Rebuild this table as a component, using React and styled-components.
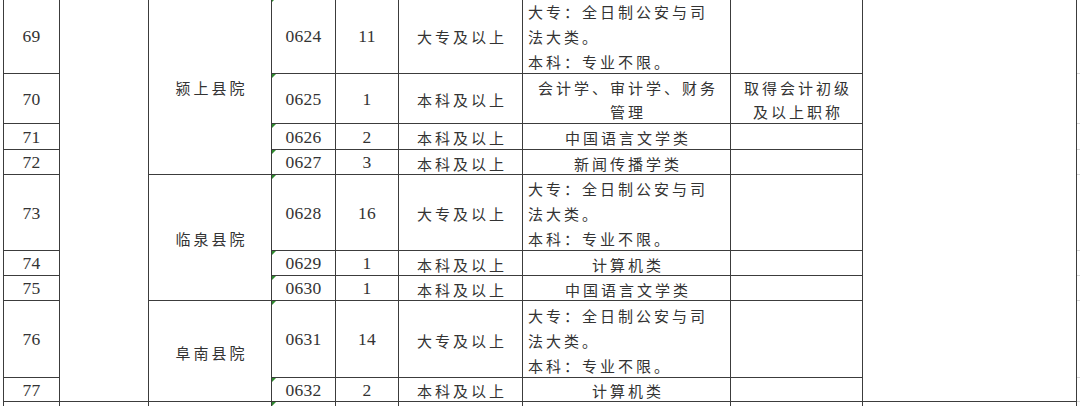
import React from "react";
import styled, { createGlobalStyle, css } from "styled-components";

const Global = createGlobalStyle`
  html, body { margin: 0; padding: 0; background: #fff; overflow: hidden; }
  #root { width: 1080px; height: 406px; overflow: hidden; }
`;

const LINE = "#3c3c3c";

const Page = styled.div`
  width: 1080px;
  height: 406px;
  overflow: hidden;
  background: #fff;
`;

const Sheet = styled.div`
  display: grid;
  grid-template-columns: 56px 89px 123px 64px 63px 124px 208px 132px 214px 20px;
  grid-template-rows: 76px 50px 26px 25px 76px 25px 25px 77px 24px 30px;
  margin: -2px 0 0 3px;
  border-left: 1px solid ${LINE};
  width: max-content;
  color: #2a2a2a;
`;

const Cell = styled.div`
  box-sizing: border-box;
  grid-column: ${(p) => p.$c};
  grid-row: ${(p) => p.$r} / span ${(p) => p.$rs || 1};
  border-right: 1px solid ${LINE};
  border-bottom: 1px solid ${LINE};
  display: flex;
  align-items: center;
  justify-content: center;
  position: relative;
  overflow: hidden;
`;

const NumCell = styled(Cell)`
  font-family: "Liberation Serif", "Times New Roman", serif;
  font-size: 17.5px;
  letter-spacing: 0.3px;
  color: #333;
  padding-top: 1px;
`;

const CodeCell = styled(NumCell)`
  &::before {
    content: "";
    position: absolute;
    left: 0;
    top: 0;
    border-top: 4px solid #2f8a2f;
    border-right: 4px solid transparent;
  }
`;

const TextCell = styled(Cell)`
  font-family: "Noto Sans CJK SC", "Noto Sans", sans-serif;
  font-size: 15px;
  letter-spacing: 3px;
  line-height: 25px;
  white-space: nowrap;
  color: #333;
  padding-top: 2px;
  ${(p) =>
    p.$left
      ? css`
          justify-content: flex-start;
          padding-left: 5px;
        `
      : css`
          padding-left: 3px;
          text-align: center;
        `}
`;

const Lines = styled.div`
  display: flex;
  flex-direction: column;
  align-items: ${(p) => (p.$left ? "flex-start" : "center")};
  line-height: ${(p) => p.$lh || 25}px;
`;

const Blank = styled(Cell)`
  ${(p) =>
    p.$faint &&
    css`
      border-right: none;
      border-bottom: 1px solid #d6d6d6;
    `}
`;

const police = ["大专：全日制公安与司", "法大类。", "本科：专业不限。"];

const rows = [
  { no: "69", code: "0624", n: "11", edu: "大专及以上", major: police, left: true },
  { no: "70", code: "0625", n: "1", edu: "本科及以上", major: ["会计学、审计学、财务", "管理"], note: ["取得会计初级", "及以上职称"], lh: 24 },
  { no: "71", code: "0626", n: "2", edu: "本科及以上", major: ["中国语言文学类"] },
  { no: "72", code: "0627", n: "3", edu: "本科及以上", major: ["新闻传播学类"] },
  { no: "73", code: "0628", n: "16", edu: "大专及以上", major: police, left: true },
  { no: "74", code: "0629", n: "1", edu: "本科及以上", major: ["计算机类"] },
  { no: "75", code: "0630", n: "1", edu: "本科及以上", major: ["中国语言文学类"] },
  { no: "76", code: "0631", n: "14", edu: "大专及以上", major: police, left: true },
  { no: "77", code: "0632", n: "2", edu: "本科及以上", major: ["计算机类"] },
];

const counties = [
  { name: "颍上县院", r: 1, rs: 4 },
  { name: "临泉县院", r: 5, rs: 3 },
  { name: "阜南县院", r: 8, rs: 2 },
];

function Multi({ items, left, lh }) {
  return (
    <Lines $left={left} $lh={lh}>
      {items.map((t, i) => (
        <span key={i}>{t}</span>
      ))}
    </Lines>
  );
}

export default function App() {
  return (
    <Page>
      <Global />
      <Sheet>
        <Blank $c={2} $r={1} $rs={9} />
        <Blank $c={9} $r={1} $rs={9} />
        {counties.map((c) => (
          <TextCell key={c.name} $c={3} $r={c.r} $rs={c.rs}>
            {c.name}
          </TextCell>
        ))}
        {rows.map((row, i) => {
          const r = i + 1;
          return (
            <React.Fragment key={row.no}>
              <NumCell $c={1} $r={r}>{row.no}</NumCell>
              <CodeCell $c={4} $r={r}>{row.code}</CodeCell>
              <NumCell $c={5} $r={r}>{row.n}</NumCell>
              <TextCell $c={6} $r={r}>{row.edu}</TextCell>
              <TextCell $c={7} $r={r} $left={row.left}>
                <Multi items={row.major} left={row.left} lh={row.lh} />
              </TextCell>
              <TextCell $c={8} $r={r}>
                {row.note ? <Multi items={row.note} lh={row.lh} /> : null}
              </TextCell>
              <Blank $c={10} $r={r} $faint />
            </React.Fragment>
          );
        })}
        {[1, 2, 3, 5, 6, 7, 8, 9].map((c) => (
          <Blank key={c} $c={c} $r={10} />
        ))}
        <CodeCell $c={4} $r={10} />
        <Blank $c={10} $r={10} $faint />
      </Sheet>
    </Page>
  );
}
